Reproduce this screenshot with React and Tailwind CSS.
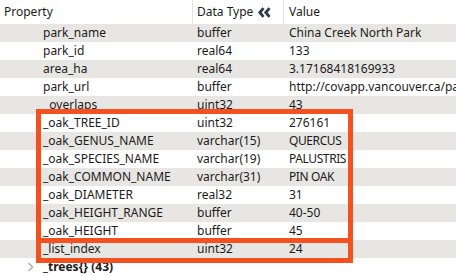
import React from "react";

const rows = [
  ["park_name", "buffer", "China Creek North Park"],
  ["park_id", "real64", "133"],
  ["area_ha", "real64", "3.17168418169933"],
  ["park_url", "buffer", "http://covapp.vancouver.ca/parks/parkdetails.aspx"],
  ["_overlaps", "uint32", "43"],
  ["_oak_TREE_ID", "uint32", "276161"],
  ["_oak_GENUS_NAME", "varchar(15)", "QUERCUS"],
  ["_oak_SPECIES_NAME", "varchar(19)", "PALUSTRIS"],
  ["_oak_COMMON_NAME", "varchar(31)", "PIN OAK"],
  ["_oak_DIAMETER", "real32", "31"],
  ["_oak_HEIGHT_RANGE", "buffer", "40-50"],
  ["_oak_HEIGHT", "buffer", "45"],
  ["_list_index", "uint32", "24"],
];

export default function App() {
  return (
    <div
      className="relative w-[456px] h-[276px] overflow-hidden bg-white text-[12px] text-[#1b1b1b]"
      style={{ fontFamily: '"Noto Sans", "Open Sans", sans-serif' }}
    >
      <div className="grid grid-cols-[193px_91px_1fr] h-[24px] items-center bg-white">
        <div className="pl-[4px] border-r border-[#e3e3e3] h-full flex items-center">Property</div>
        <div className="pl-[4px] border-r border-[#e3e3e3] h-full flex items-center justify-between pr-[12px]">
          <span>Data Type</span>
          <svg width="13" height="11" viewBox="0 0 13 11" className="mt-[1px]">
            <path d="M5.5 1.2 L1.8 5.5 L5.5 9.8" stroke="#2e3b46" strokeWidth="2.8" fill="none" />
            <path d="M11.5 1.2 L7.8 5.5 L11.5 9.8" stroke="#2e3b46" strokeWidth="2.8" fill="none" />
          </svg>
        </div>
        <div className="pl-[5px] h-full flex items-center">Value</div>
      </div>
      {rows.map((r, i) => (
        <div
          key={r[0]}
          className={`grid grid-cols-[193px_91px_1fr] h-[18px] items-center whitespace-nowrap ${i % 2 === 0 ? "bg-[#e7e6e3]" : "bg-white"}`}
        >
          <div className={i === 4 ? "pl-[44px]" : "pl-[43px]"}>{r[0]}</div>
          <div className="pl-[4px]">{r[1]}</div>
          <div className={`pl-[5px] overflow-hidden ${i >= 6 && i <= 8 ? "tracking-[-0.4px]" : ""}`}>{r[2]}</div>
        </div>
      ))}
      <div className="h-[18px] flex items-center bg-white">
        <svg width="8" height="10" viewBox="0 0 8 10" className="ml-[27px] mr-[8px]">
          <path d="M1.5 1 L5.5 5 L1.5 9" stroke="#a9a9a9" strokeWidth="1.3" fill="none" />
        </svg>
        <span className="font-bold">_trees{"{}"} (43)</span>
      </div>
      <div className="absolute left-[36px] top-[109px] w-[317px] h-[134px] border-[5px] border-[#f4511e]" />
      <div className="absolute left-[36px] top-[238px] w-[317px] h-[25px] border-[5px] border-[#f4511e]" />
    </div>
  );
}
